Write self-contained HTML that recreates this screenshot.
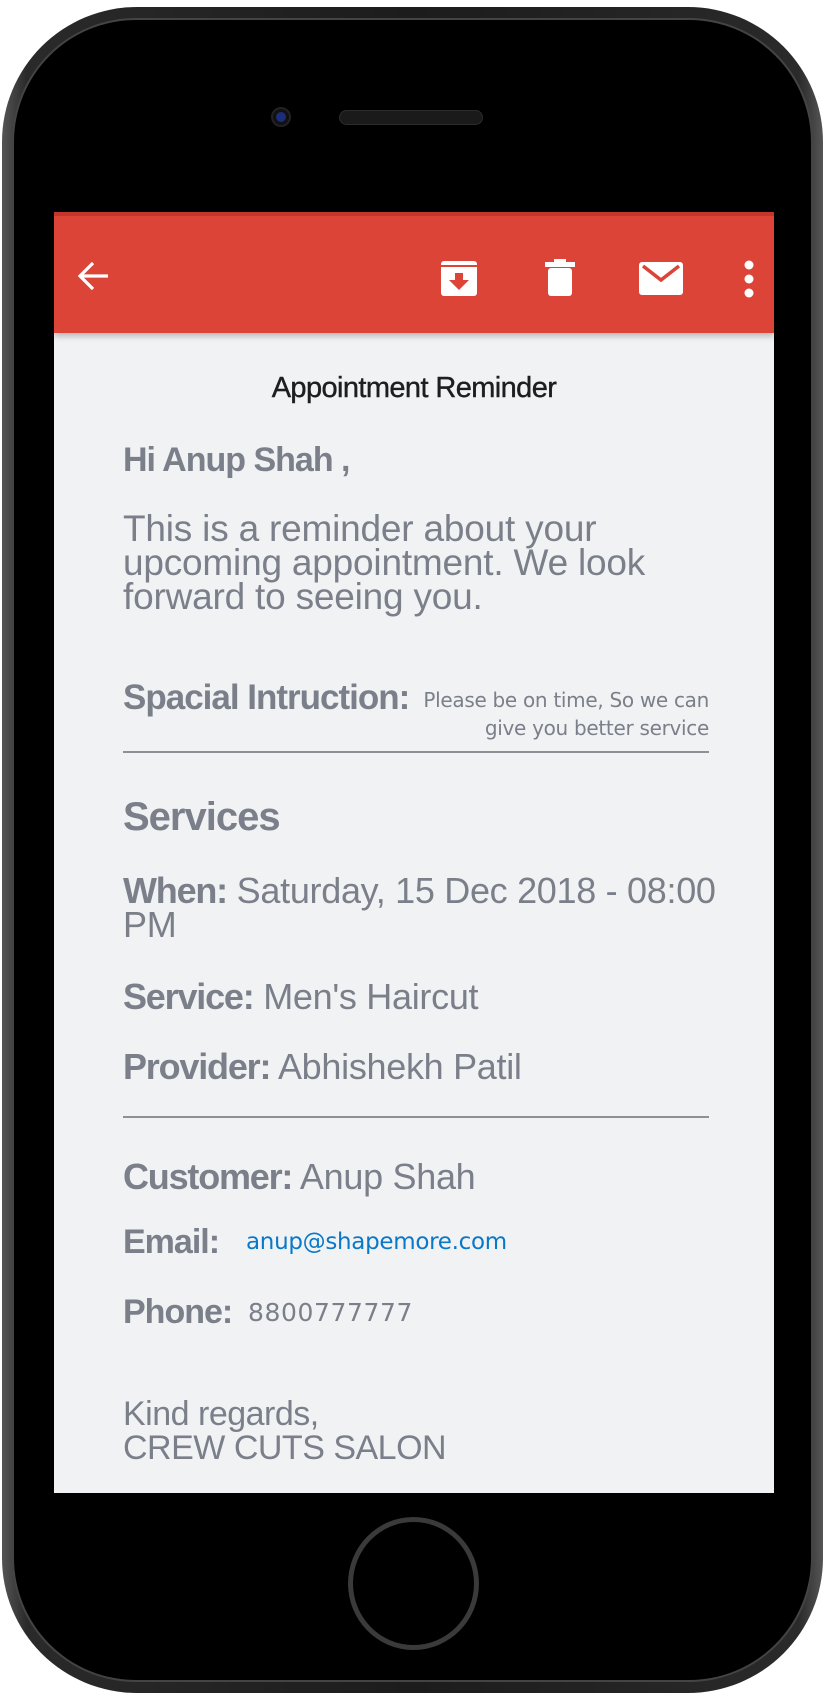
<!DOCTYPE html>
<html><head><meta charset="utf-8"><style>
*{margin:0;padding:0;box-sizing:border-box}
html,body{width:826px;height:1708px;background:#fff;overflow:hidden;font-family:"Liberation Sans",sans-serif}
.abs{position:absolute}
#body{left:2px;top:7px;width:821px;height:1686px;border-radius:135px;background:linear-gradient(90deg,#555 0%,#2a2a2a 3%,#1c1c1c 50%,#2a2a2a 97%,#555 100%)}
#inner{left:14px;top:20px;width:797px;height:1660px;border-radius:122px;background:#000;box-shadow:0 0 0 2px #444}
#screen{left:54px;top:212px;width:720px;height:1281px;background:#f1f2f4;overflow:hidden}
#bar{left:0;top:0;width:720px;height:121px;background:#db4437;border-top:4px solid #c2362b;box-shadow:0 3px 6px rgba(0,0,0,.25)}
.t{position:absolute;color:#7a7f8a;white-space:nowrap}
.b{font-weight:bold;letter-spacing:-1px}
.r{font-size:36px;letter-spacing:-0.3px}
.sm{font-family:"DejaVu Sans","Liberation Sans",sans-serif;font-size:20px;letter-spacing:-0.3px}
.hr{position:absolute;left:69px;width:586px;height:2px;background:#8e9096}
</style></head><body>
<div class="abs" id="body"></div>
<div class="abs" id="inner"></div>
<div class="abs" style="left:271px;top:107px;width:20px;height:20px;border-radius:50%;background:#111;border:2px solid #222"><div style="margin:3px;width:10px;height:10px;border-radius:50%;background:#1c2d7a"></div></div>
<div class="abs" style="left:339px;top:110px;width:144px;height:15px;border-radius:8px;background:#1a1a1a;border:1px solid #2c2c2c"></div>
<div class="abs" style="left:348px;top:1517px;width:131px;height:133px;border-radius:50%;border:5px solid #3a3a3a;background:#000"></div>

<div class="abs" id="screen">
  <div class="abs" id="bar">
    <svg class="abs" style="left:20px;top:40px" width="40" height="40" viewBox="0 0 40 40"><path d="M34 20H7M19 7L6 20l13 13" stroke="#fff" stroke-width="3.2" fill="none"/></svg>
    <svg class="abs" style="left:385px;top:43px" width="40" height="40" viewBox="0 0 40 40"><rect x="2" y="2" width="36" height="35" rx="3" fill="#fff"/><rect x="2" y="6" width="36" height="2" fill="#db4437"/><path d="M16 14h8v7h6l-10 10-10-10h6z" fill="#db4437"/></svg>
    <svg class="abs" style="left:490px;top:42px" width="32" height="40" viewBox="0 0 32 40"><rect x="1" y="4" width="30" height="5" fill="#fff"/><rect x="10" y="1" width="12" height="5" fill="#fff"/><rect x="4" y="10" width="24" height="28" rx="3" fill="#fff"/></svg>
    <svg class="abs" style="left:584px;top:44px" width="46" height="36" viewBox="0 0 46 36"><rect x="1" y="2" width="44" height="33" rx="3" fill="#fff"/><path d="M5 6l18 14L41 6" stroke="#db4437" stroke-width="3.5" fill="none"/></svg>
    <svg class="abs" style="left:687px;top:44px" width="16" height="40" viewBox="0 0 16 40"><circle cx="8" cy="5" r="4.5" fill="#fff"/><circle cx="8" cy="19" r="4.5" fill="#fff"/><circle cx="8" cy="33" r="4.5" fill="#fff"/></svg>
  </div>
  <div class="t" style="left:0;width:720px;text-align:center;top:160px;font-size:29px;color:#1e1e1e;letter-spacing:-0.6px;-webkit-text-stroke:0.4px #1e1e1e">Appointment Reminder</div>
  <div class="t b" style="left:69px;top:229px;font-size:34px">Hi Anup Shah ,</div>
  <div class="t" style="left:69px;top:300px;line-height:34px;font-size:37px;letter-spacing:-0.2px">This is a reminder about your<br>upcoming appointment. We look<br>forward to seeing you.</div>
  <div class="t b" style="left:69px;top:466px;font-size:35px">Spacial Intruction:</div>
  <div class="t sm" style="right:65px;top:474px;text-align:right;line-height:28px">Please be on time, So we can<br>give you better service</div>
  <div class="hr" style="top:539px"></div>
  <div class="t b" style="left:69px;top:583px;font-size:40px">Services</div>
  <div class="t r" style="left:69px;top:662px;line-height:34px"><b style="letter-spacing:-1.2px">When:</b> Saturday, 15 Dec 2018 - 08:00<br>PM</div>
  <div class="t r" style="left:69px;top:764px"><b style="letter-spacing:-1.2px">Service:</b> Men's Haircut</div>
  <div class="t r" style="left:69px;top:834px"><b style="letter-spacing:-1.2px">Provider:</b> Abhishekh Patil</div>
  <div class="hr" style="top:904px"></div>
  <div class="t r" style="left:69px;top:944px"><b style="letter-spacing:-1.2px">Customer:</b> Anup Shah</div>
  <div class="t b" style="left:69px;top:1011px;font-size:34px">Email:</div>
  <div class="t sm" style="left:192px;top:1017px;font-size:23px;color:#0a78c8">anup@shapemore.com</div>
  <div class="t b" style="left:69px;top:1081px;font-size:34px">Phone:</div>
  <div class="t sm" style="left:194px;top:1086px;font-size:25px;letter-spacing:0.6px">8800777777</div>
  <div class="t" style="left:69px;top:1185px;line-height:34px;font-size:34px;letter-spacing:-0.5px">Kind regards,<br>CREW CUTS SALON</div>
</div>
</body></html>
